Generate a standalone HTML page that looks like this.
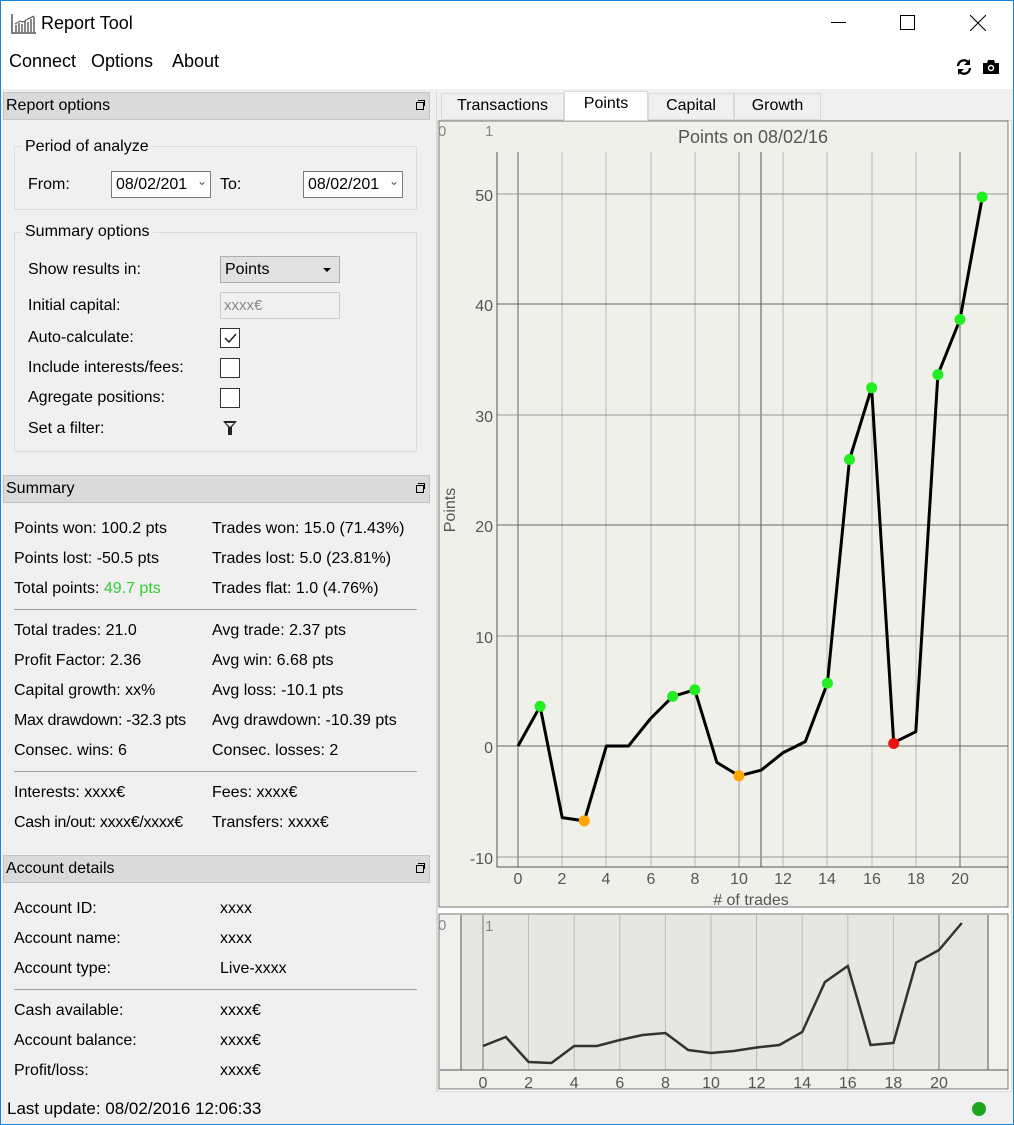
<!DOCTYPE html>
<html><head><meta charset="utf-8"><style>
*{margin:0;padding:0;box-sizing:border-box}
body{width:1014px;height:1125px;position:relative;background:#f0f0f0;font-family:"Liberation Sans",sans-serif;color:#000;overflow:hidden}
.t{position:absolute;white-space:nowrap;font-size:16px;line-height:20px}
.hdr{position:absolute;left:3px;width:427px;height:28px;background:#dadada;border:1px solid #c4c4c4}
.hdr span{position:absolute;left:2px;top:4px;font-size:16px}
.hdr i{position:absolute;right:5px;top:9px;width:8px;height:8px;border:1px solid #000}
.hdr i:after{content:"";position:absolute;left:1px;top:-3px;width:6px;height:5px;border:1px solid #000;border-left:none;border-bottom:none}
.grp{position:absolute;left:14px;width:403px;border:1px solid #dcdcdc}
.sep{position:absolute;left:14px;width:403px;height:1px;background:#a0a0a0}
.cb{position:absolute;left:220px;width:20px;height:20px;border:1px solid #333;background:#fff}
.date{position:absolute;width:100px;height:27px;border:1px solid #7a7a7a;background:#fff;font-size:16px;padding:4px 0 0 4px}
.tab{position:absolute;top:93px;height:27px;border:1px solid #d9d9d9;background:#f0f0f0;font-size:16px;text-align:center;padding-top:3px}
</style></head><body>
<div style="position:absolute;left:0;top:0;width:1014px;height:89px;background:#fff"></div>
<div style="position:absolute;left:0;top:0;width:1014px;height:1125px;border:1px solid #1883d7;pointer-events:none;z-index:10"></div>
<svg style="position:absolute;left:11px;top:13px" width="26" height="22" viewBox="0 0 26 22"><path d="M1 1V20H25" stroke="#555" fill="none" stroke-width="1.5"/><g fill="#888"><rect x="4" y="12" width="2" height="7"/><rect x="7" y="10" width="2" height="9"/><rect x="10" y="11" width="2" height="8"/><rect x="13" y="8" width="2" height="11"/><rect x="16" y="9" width="2" height="10"/><rect x="19" y="6" width="2" height="13"/><rect x="22" y="4" width="2" height="15"/></g><path d="M4 11L9 8L12 9L17 6L23 3" stroke="#444" fill="none"/></svg>
<div class="t" style="left:41px;top:13px;font-size:18px">Report Tool</div>
<div style="position:absolute;left:831px;top:22px;width:15px;height:1px;background:#000"></div>
<div style="position:absolute;left:900px;top:15px;width:15px;height:15px;border:1px solid #000"></div>
<svg style="position:absolute;left:970px;top:15px" width="16" height="16"><path d="M0 0L16 16M16 0L0 16" stroke="#000" stroke-width="1.1"/></svg>
<div class="t" style="left:9px;top:51px;font-size:18px">Connect</div>
<div class="t" style="left:91px;top:51px;font-size:18px">Options</div>
<div class="t" style="left:172px;top:51px;font-size:18px">About</div>
<svg style="position:absolute;left:955px;top:58px" width="18" height="18" viewBox="0 0 18 18"><path d="M3 8A6 6 0 0 1 14 5" stroke="#000" stroke-width="2.4" fill="none"/><path d="M15 1V7H9Z" fill="#000"/><path d="M15 10A6 6 0 0 1 4 13" stroke="#000" stroke-width="2.4" fill="none"/><path d="M3 17V11H9Z" fill="#000"/></svg>
<svg style="position:absolute;left:982px;top:59px" width="18" height="16" viewBox="0 0 18 16"><path d="M1 4H5L6 1H12L13 4H17V15H1Z" fill="#000"/><circle cx="9" cy="9" r="3.2" fill="#fff"/><circle cx="9" cy="9" r="1.8" fill="#000"/></svg>

<div class="hdr" style="top:92px"><span>Report options</span><i></i></div>
<div class="grp" style="top:146px;height:64px"></div>
<div class="t" style="left:22px;top:137px;background:#f0f0f0;padding:0 3px">Period of analyze</div>
<div class="t" style="left:28px;top:175px">From:</div>
<div class="date" style="left:111px;top:171px">08/02/201<span style="position:absolute;right:3px;top:2px;font-size:12px;color:#555">&#8964;</span></div>
<div class="t" style="left:220px;top:175px">To:</div>
<div class="date" style="left:303px;top:171px">08/02/201<span style="position:absolute;right:3px;top:2px;font-size:12px;color:#555">&#8964;</span></div>
<div class="grp" style="top:232px;height:220px"></div>
<div class="t" style="left:22px;top:222px;background:#f0f0f0;padding:0 3px">Summary options</div>
<div class="t" style="left:28px;top:260px">Show results in:</div>
<div style="position:absolute;left:220px;top:256px;width:120px;height:27px;background:#e1e1e1;border:1px solid #adadad;font-size:16px;padding:4px 0 0 4px">Points<span style="position:absolute;right:8px;top:11px;border:4px solid transparent;border-top:4px solid #000"></span></div>
<div class="t" style="left:28px;top:296px">Initial capital:</div>
<div style="position:absolute;left:220px;top:292px;width:120px;height:27px;background:#f0f0f0;border:1px solid #ccc;font-size:15px;padding:4px 0 0 3px;color:#888">xxxx€</div>
<div class="t" style="left:28px;top:328px">Auto-calculate:</div>
<div class="cb" style="top:328px"><svg width="18" height="18"><path d="M4 9L8 13L15 5" stroke="#222" stroke-width="1.5" fill="none"/></svg></div>
<div class="t" style="left:28px;top:358px">Include interests/fees:</div>
<div class="cb" style="top:358px"></div>
<div class="t" style="left:28px;top:388px">Agregate positions:</div>
<div class="cb" style="top:388px"></div>
<div class="t" style="left:28px;top:419px">Set a filter:</div>
<svg style="position:absolute;left:222px;top:420px" width="16" height="16"><path d="M1 1H15L10 7V15H6V7Z" fill="#222"/><path d="M4 3H12L8 7Z" fill="#f0f0f0"/></svg>

<div class="hdr" style="top:475px"><span>Summary</span><i></i></div>
<div class="t" style="left:14px;top:519px">Points won: 100.2 pts</div><div class="t" style="left:212px;top:519px">Trades won: 15.0 (71.43%)</div>
<div class="t" style="left:14px;top:549px">Points lost: -50.5 pts</div><div class="t" style="left:212px;top:549px">Trades lost: 5.0 (23.81%)</div>
<div class="t" style="left:14px;top:579px">Total points: <span style="color:#33cc33">49.7 pts</span></div><div class="t" style="left:212px;top:579px">Trades flat: 1.0 (4.76%)</div>
<div class="sep" style="top:609px"></div>
<div class="t" style="left:14px;top:621px">Total trades: 21.0</div><div class="t" style="left:212px;top:621px">Avg trade: 2.37 pts</div>
<div class="t" style="left:14px;top:651px">Profit Factor: 2.36</div><div class="t" style="left:212px;top:651px">Avg win: 6.68 pts</div>
<div class="t" style="left:14px;top:681px">Capital growth: xx%</div><div class="t" style="left:212px;top:681px">Avg loss: -10.1 pts</div>
<div class="t" style="left:14px;top:711px;letter-spacing:-0.3px">Max drawdown: -32.3 pts</div><div class="t" style="left:212px;top:711px">Avg drawdown: -10.39 pts</div>
<div class="t" style="left:14px;top:741px">Consec. wins: 6</div><div class="t" style="left:212px;top:741px">Consec. losses: 2</div>
<div class="sep" style="top:771px"></div>
<div class="t" style="left:14px;top:783px">Interests: xxxx€</div><div class="t" style="left:212px;top:783px">Fees: xxxx€</div>
<div class="t" style="left:14px;top:813px;letter-spacing:-0.3px">Cash in/out: xxxx€/xxxx€</div><div class="t" style="left:212px;top:813px">Transfers: xxxx€</div>

<div class="hdr" style="top:855px"><span>Account details</span><i></i></div>
<div class="t" style="left:14px;top:899px">Account ID:</div><div class="t" style="left:220px;top:899px">xxxx</div>
<div class="t" style="left:14px;top:929px">Account name:</div><div class="t" style="left:220px;top:929px">xxxx</div>
<div class="t" style="left:14px;top:959px">Account type:</div><div class="t" style="left:220px;top:959px">Live-xxxx</div>
<div class="sep" style="top:989px"></div>
<div class="t" style="left:14px;top:1001px">Cash available:</div><div class="t" style="left:220px;top:1001px">xxxx€</div>
<div class="t" style="left:14px;top:1031px">Account balance:</div><div class="t" style="left:220px;top:1031px">xxxx€</div>
<div class="t" style="left:14px;top:1061px">Profit/loss:</div><div class="t" style="left:220px;top:1061px">xxxx€</div>
<div class="t" style="left:7px;top:1099px;font-size:17px">Last update: 08/02/2016 12:06:33</div>
<div style="position:absolute;left:972px;top:1102px;width:14px;height:14px;border-radius:50%;background:#1ea51e"></div>
<div style="position:absolute;left:436px;top:92px;width:1px;height:1000px;background:#d8d8d8"></div>

<div class="tab" style="left:441px;width:123px">Transactions</div>
<div class="tab" style="left:564px;width:84px;top:91px;height:30px;background:#fff;z-index:2">Points</div>
<div class="tab" style="left:648px;width:86px">Capital</div>
<div class="tab" style="left:734px;width:87px">Growth</div>
<div style="position:absolute;left:437px;top:120px;width:575px;height:972px;background:#fff;border:1px solid #d9d9d9"></div>

<svg style="position:absolute;left:0;top:0" width="1014" height="1125" font-family="Liberation Sans, sans-serif">
<rect x="439" y="121" width="569" height="786" fill="#f0f0eb" stroke="#777"/>
<text x="438" y="136" font-size="15" fill="#888">0</text><text x="485" y="136" font-size="15" fill="#888">1</text>
<text x="753" y="143" font-size="18" fill="#555" text-anchor="middle">Points on 08/02/16</text>
<g stroke="#b8b8b8"><line x1="562" y1="152" x2="562" y2="867"/><line x1="606" y1="152" x2="606" y2="867"/><line x1="651" y1="152" x2="651" y2="867"/><line x1="695" y1="152" x2="695" y2="867"/><line x1="783" y1="152" x2="783" y2="867"/><line x1="827" y1="152" x2="827" y2="867"/><line x1="872" y1="152" x2="872" y2="867"/><line x1="916" y1="152" x2="916" y2="867"/></g>
<g stroke="#666"><line x1="518" y1="152" x2="518" y2="867"/><line x1="960" y1="152" x2="960" y2="867"/></g>
<line x1="739" y1="152" x2="739" y2="867" stroke="#999"/>
<line x1="761" y1="152" x2="761" y2="867" stroke="#555"/>
<g stroke="#999"><line x1="497" y1="194" x2="1008" y2="194"/><line x1="497" y1="415" x2="1008" y2="415"/><line x1="497" y1="636" x2="1008" y2="636"/><line x1="497" y1="857" x2="1008" y2="857"/></g>
<g stroke="#666"><line x1="497" y1="304" x2="1008" y2="304"/><line x1="497" y1="525" x2="1008" y2="525"/><line x1="497" y1="746" x2="1008" y2="746"/></g>
<path d="M497 152V867H1008" stroke="#555" fill="none"/>
<g font-size="16" fill="#555" text-anchor="end"><text x="493" y="201">50</text><text x="493" y="311">40</text><text x="493" y="422">30</text><text x="493" y="532">20</text><text x="493" y="643">10</text><text x="493" y="753">0</text><text x="493" y="864">-10</text></g>
<g font-size="16" fill="#555" text-anchor="middle"><text x="518" y="884">0</text><text x="562" y="884">2</text><text x="606" y="884">4</text><text x="651" y="884">6</text><text x="695" y="884">8</text><text x="739" y="884">10</text><text x="783" y="884">12</text><text x="827" y="884">14</text><text x="872" y="884">16</text><text x="916" y="884">18</text><text x="960" y="884">20</text>
<text x="751" y="905">#  of trades</text>
<text transform="translate(455,510) rotate(-90)">Points</text></g>
<polyline fill="none" stroke="#000" stroke-width="3" stroke-linejoin="round" points="518,746 540.1,706.3 562.2,817.6 584.3,820.9 606.4,746 628.5,746 650.6,718.5 672.7,696.4 694.8,689.8 716.9,762.5 739,775.8 761.1,770.2 783.2,752.6 805.3,741.6 827.4,683.2 849.5,459.5 871.6,387.8 893.7,742.7 915.8,731.7 937.9,374.6 960,319.5 982.1,198.3"/>
<g fill="#22ee22"><circle cx="540.1" cy="706.3" r="5.5"/><circle cx="672.7" cy="696.4" r="5.5"/><circle cx="694.8" cy="689.8" r="5.5"/><circle cx="827.4" cy="683.2" r="5.5"/><circle cx="849.5" cy="459.5" r="5.5"/><circle cx="871.6" cy="387.8" r="5.5"/><circle cx="937.9" cy="374.6" r="5.5"/><circle cx="960" cy="319.5" r="5.5"/><circle cx="982.1" cy="197" r="5.5"/></g>
<g fill="#ffa500"><circle cx="584.3" cy="820.9" r="5.5"/><circle cx="739" cy="775.8" r="5.5"/></g>
<circle cx="893.7" cy="743.5" r="5.5" fill="#ee1111"/>

<rect x="439" y="914" width="569" height="175" fill="#f0f0ec" stroke="#777"/>
<rect x="461" y="915" width="527" height="155" fill="#e6e6e2"/>
<line x1="461" y1="915" x2="461" y2="1070" stroke="#555"/><line x1="988" y1="915" x2="988" y2="1070" stroke="#555"/>
<g stroke="#bbb"><line x1="528.6" y1="915" x2="528.6" y2="1070"/><line x1="574.2" y1="915" x2="574.2" y2="1070"/><line x1="619.8" y1="915" x2="619.8" y2="1070"/><line x1="665.4" y1="915" x2="665.4" y2="1070"/><line x1="711" y1="915" x2="711" y2="1070"/><line x1="756.6" y1="915" x2="756.6" y2="1070"/><line x1="802.2" y1="915" x2="802.2" y2="1070"/><line x1="847.8" y1="915" x2="847.8" y2="1070"/><line x1="893.4" y1="915" x2="893.4" y2="1070"/></g>
<g stroke="#777"><line x1="483" y1="915" x2="483" y2="1070"/><line x1="939" y1="915" x2="939" y2="1070"/></g>
<line x1="440" y1="1070" x2="1008" y2="1070" stroke="#555"/>
<text x="438" y="930" font-size="15" fill="#888">0</text><text x="485" y="931" font-size="15" fill="#888">1</text>
<polyline fill="none" stroke="#333" stroke-width="2.5" points="483,1046 505.8,1037 528.6,1062 551.4,1063 574.2,1046 597,1046 619.8,1040 642.6,1035 665.4,1033 688.2,1050 711,1053 733.8,1051 756.6,1047.5 779.4,1045 802.2,1032 825,982 847.8,966 870.6,1045 893.4,1043 916.2,962.6 939,950 961.8,923"/>
<g font-size="16" fill="#555" text-anchor="middle"><text x="483" y="1088">0</text><text x="528.6" y="1088">2</text><text x="574.2" y="1088">4</text><text x="619.8" y="1088">6</text><text x="665.4" y="1088">8</text><text x="711" y="1088">10</text><text x="756.6" y="1088">12</text><text x="802.2" y="1088">14</text><text x="847.8" y="1088">16</text><text x="893.4" y="1088">18</text><text x="939" y="1088">20</text></g>
</svg>
</body></html>
